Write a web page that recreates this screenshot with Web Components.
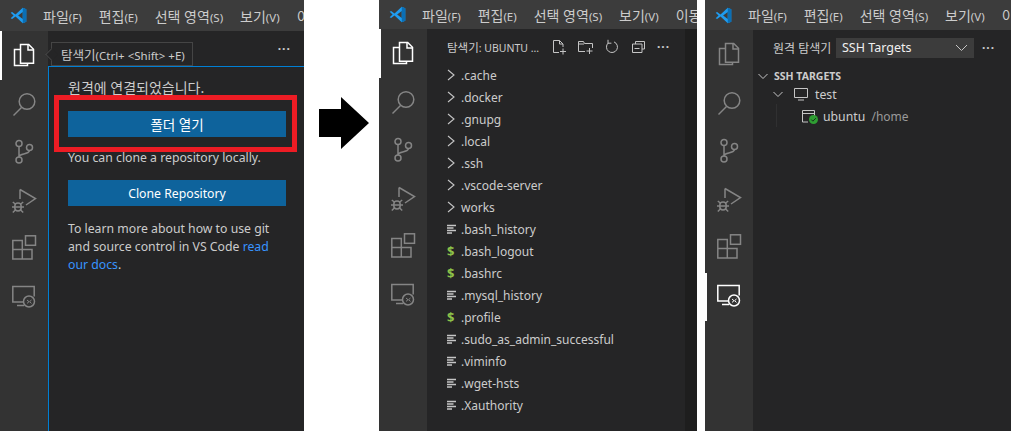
<!DOCTYPE html>
<html lang="ko">
<head>
<meta charset="utf-8">
<title>VS Code remote</title>
<style>
    html, body { margin: 0; height: 431px; overflow: hidden; background: #fff; }
    body { font-family: "Noto Sans", "Noto Sans CJK KR", sans-serif; }
    .main { display: flex; height: 431px; }
</style>
</head>
<body>
<div class="main">
    <vs-window style="width:304px" active="files" title-height="31">
        <vs-welcome></vs-welcome>
    </vs-window>
    <big-arrow></big-arrow>
    <vs-window style="width:318px" active="files" title-height="29" editor="12">
        <vs-explorer></vs-explorer>
    </vs-window>
    <div style="width:8px"></div>
    <vs-window style="width:306px" active="remote" title-height="30">
        <vs-remote></vs-remote>
    </vs-window>
</div>

<script>
const ICONS = {
    files: `<path d="M8.500 1.500h8.200l4.800 4.800v14h-13z"/><path d="M16 1.500v5.500h5.500"/><path d="M8.500 6.500h-6v16h13v-2.200"/>`,
    search: `<circle cx="15" cy="9.500" r="7.800"/><path d="M9.500 15.500 1.500 23.500"/>`,
    git: `<circle cx="7" cy="3.500" r="3"/><circle cx="7" cy="20" r="3"/><circle cx="17.500" cy="7.500" r="3"/><path d="M7 6.500v10.500M7 16.500c1-3.500 9.500-1.500 10.500-6"/>`,
    debug: `<path d="M8 .5V10M8 .5 23.500 9.500 14 16"/><rect x="2.800" y="14" width="6.400" height="8" rx="3.200"/><path d="M0 18h12M.8 13l2.500 2M11.200 13l-2.500 2M.8 23.500l2.500-2.500M11.200 23.500l-2.500-2.500"/>`,
    ext: `<path d="M.8 3.500h9.500v9h9.700V22H.8zM.8 12.500h9.500M10.300 12.500V22"/><rect x="13.500" y="-1.200" width="10" height="9.500"/>`,
    remote: `<path d="M12 16H.8V.5h21.400v10"/><path d="M5 19.500h7"/><circle cx="17" cy="15.500" r="5.500"/><path d="M15 14l2 1.700-2 1.700M19.500 14l-2 1.700 2 1.700" stroke-width="1"/>`
};

class VsLogo extends HTMLElement {
    constructor() {
        super();
        this.attachShadow({mode: 'open'}).innerHTML = `
        <style>:host{display:block;width:17px;height:17px} svg{display:block}</style>
        <svg width="17" height="17" viewBox="0 0 24 24">
            <path fill="#1f9cf0" d="M1 8.200 3 7l4.800 3.600L18 1l5 2.300v17.400L18 23 7.800 13.400 3 17l-2-1.200L5 12zM18 7 11.500 12l6.500 5z" fill-rule="evenodd"/>
            <path fill="#0a6fb5" d="M18 1l5 2.300v17.400L18 23V17l0-10z"/>
        </svg>`;
    }
}
customElements.define("vs-logo", VsLogo);

class VsTitlebar extends HTMLElement {
    constructor() {
        super();
        const menus = [['파일', '(F)'], ['편집', '(E)'], ['선택 영역', '(S)'], ['보기', '(V)'], ['이동', '(G)']];
        this.attachShadow({mode: 'open'}).innerHTML = `
        <style>
            :host{display:flex;align-items:center;background:#3c3c3c;color:#ccc;font-size:14px;overflow:hidden;white-space:nowrap;padding-left:10px;box-sizing:border-box}
            vs-logo{margin-right:16px;flex:none}
            span{flex:none;margin-right:17px}
            small{font-size:11.500px}
        </style>
        <vs-logo></vs-logo>
        ${menus.map(m => `<span>${m[0]}<small>${m[1]}</small></span>`).join('')}`;
    }
}
customElements.define("vs-titlebar", VsTitlebar);

class VsActivity extends HTMLElement {
    constructor() {
        super();
        const active = this.getAttribute('active');
        const items = Object.keys(ICONS).map(name => `
            <div class="item ${name === active ? 'on' : ''}">
                <svg width="24" height="24" viewBox="0 0 24 24">${ICONS[name]}</svg>
            </div>`).join('');
        this.attachShadow({mode: 'open'}).innerHTML = `
        <style>
            :host{display:block;width:48px;flex:none;background:#333}
            .item{height:48.500px;display:flex;align-items:center;justify-content:center;box-sizing:border-box;border-left:2px solid transparent;padding-right:2px}
            .on{border-left-color:#fff}
            svg{fill:none;stroke:#858585;stroke-width:1.500;overflow:visible}
            .on svg{stroke:#fff}
        </style>
        ${items}`;
    }
}
customElements.define("vs-activity", VsActivity);

class VsWindow extends HTMLElement {
    constructor() {
        super();
        const titleHeight = this.getAttribute('title-height') || 30;
        const editor = this.getAttribute('editor') || 0;
        const active = this.getAttribute('active');
        this.attachShadow({mode: 'open'}).innerHTML = `
        <style>
            :host{display:flex;flex-direction:column;height:431px;flex:none;overflow:hidden;color:#ccc}
            vs-titlebar{height:${titleHeight}px;flex:none}
            .body{flex:1;display:flex;min-height:0}
            .side{flex:1;background:#252526;min-width:0;position:relative}
            .editor{width:${editor}px;flex:none;background:#1e1e1e}
        </style>
        <vs-titlebar></vs-titlebar>
        <div class="body">
            <vs-activity active="${active}"></vs-activity>
            <div class="side"><slot></slot></div>
            <div class="editor"></div>
        </div>`;
    }
}
customElements.define("vs-window", VsWindow);

class VsButton extends HTMLElement {
    constructor() {
        super();
        this.attachShadow({mode: 'open'}).innerHTML = `
        <style>
            :host{display:flex;align-items:center;justify-content:center;height:26px;background:#0e639c;color:#fff;font-size:12.250px}
        </style>
        <slot></slot>`;
    }
}
customElements.define("vs-button", VsButton);

class VsWelcome extends HTMLElement {
    constructor() {
        super();
        this.attachShadow({mode: 'open'}).innerHTML = `
        <style>
            :host{display:block;font-size:12.250px;color:#ccc}
            .head{height:35px;display:flex;align-items:center;justify-content:flex-end;padding-right:13px;box-sizing:border-box;letter-spacing:1px;font-weight:700}
            .focus{height:365px;box-sizing:border-box;border-left:1px solid #007fd4;border-top:1px solid #007fd4;padding:12px 18px 0 19px}
            p{margin:0;line-height:18px}
            .ko{font-size:14px}
            .highlight{position:relative;margin:14px 0 12px}
            .highlight::after{content:"";position:absolute;left:-14px;right:-11px;top:-16px;bottom:-15px;border:5px solid #ed1c24}
            .highlight vs-button{font-size:13.500px}
            a{color:#3794ff;text-decoration:none}
            .clone{margin:13px 0 14px}
            .tip{position:absolute;left:3px;top:11px;height:24px;width:142px;box-sizing:border-box;padding:0 9px;display:flex;align-items:center;background:#252526;border:1px solid #454545;font-size:12.500px;white-space:nowrap}
            .tip small{font-size:11.500px}
            .tip::before{content:"";position:absolute;left:-5px;top:7px;width:8px;height:8px;background:#252526;border-left:1px solid #454545;border-bottom:1px solid #454545;transform:rotate(45deg)}
        </style>
        <div class="head">···</div>
        <div class="tip"><span>탐색기<small>(Ctrl+ &lt;Shift&gt; +E)</small></span></div>
        <div class="focus">
            <p class="ko">원격에 연결되었습니다.</p>
            <div class="highlight"><vs-button>폴더 열기</vs-button></div>
            <p>You can clone a repository locally.</p>
            <div class="clone"><vs-button>Clone Repository</vs-button></div>
            <p>To learn more about how to use git</p>
            <p>and source control in VS Code <a>read</a></p>
            <p><a>our docs</a>.</p>
        </div>`;
    }
}
customElements.define("vs-welcome", VsWelcome);

class TreeRow extends HTMLElement {
    constructor() {
        super();
        const kind = this.getAttribute('kind');
        let icon = '';
        if (kind === 'dir') {
            icon = `<svg width="10" height="12" viewBox="0 0 10 12"><path d="M1 1l6 5-6 5" fill="none" stroke="#c5c5c5" stroke-width="1.100"/></svg>`;
        } else if (kind === 'sh') {
            icon = `<b>$</b>`;
        } else {
            icon = `<svg width="10" height="10" viewBox="0 0 10 10"><path d="M0 1.500h9M0 4h6.500M0 6.500h9M0 9h5" stroke="#c5c5c5" stroke-width="1.300"/></svg>`;
        }
        this.attachShadow({mode: 'open'}).innerHTML = `
        <style>
            :host{display:flex;align-items:center;height:22px;padding-left:20px;font-size:12px;color:#ccc}
            .ic{width:14px;display:flex;align-items:center}
            b{color:#8dc149;font-size:13px}
        </style>
        <span class="ic">${icon}</span><slot></slot>`;
    }
}
customElements.define("tree-row", TreeRow);

class VsExplorer extends HTMLElement {
    constructor() {
        super();
        const dirs = ['.cache', '.docker', '.gnupg', '.local', '.ssh', '.vscode-server', 'works'];
        const files = [['.bash_history'], ['.bash_logout', 'sh'], ['.bashrc', 'sh'], ['.mysql_history'], ['.profile', 'sh'],
            ['.sudo_as_admin_successful'], ['.viminfo'], ['.wget-hsts'], ['.Xauthority']];
        const rows = dirs.map(d => `<tree-row kind="dir">${d}</tree-row>`).join('')
            + files.map(f => `<tree-row kind="${f[1] || 'file'}">${f[0]}</tree-row>`).join('');
        this.attachShadow({mode: 'open'}).innerHTML = `
        <style>
            :host{display:block;color:#ccc}
            .head{height:35px;display:flex;align-items:center;padding-left:20px;font-size:10.500px;white-space:nowrap}
            .title{width:105px;flex:none}
            .title em{font-style:normal;font-size:11.500px}
            svg{fill:none;stroke:#c5c5c5;stroke-width:1;margin-right:11px;flex:none}
            .more{font-weight:700;font-size:12px;letter-spacing:1px}
        </style>
        <div class="head">
            <span class="title"><em>탐색기</em>: UBUNTU ...</span>
            <svg width="15" height="16" viewBox="0 0 15 16"><path d="M7 13.500H1.500v-12h6l3.500 3.500v3M7.500 1.500V5H11M11 9.500v6M8 12.500h6"/></svg>
            <svg width="16" height="16" viewBox="0 0 16 16"><path d="M7 12.500H.5v-10h5l1 2h8v4.500M.5 5h5.500M11.500 9v6M8.500 12h6"/></svg>
            <svg width="15" height="16" viewBox="0 0 15 16" stroke-width="1.300"><path d="M3.200 4A5.500 5.500 0 1 0 9 2.900M3 .8v3.400h3.400"/></svg>
            <svg width="15" height="16" viewBox="0 0 15 16"><path d="M4.500 5V2.500h9v7.500H11M1.500 5h9.500v8.500H1.500zM3.500 9.500h5"/></svg>
            <span class="more">···</span>
        </div>
        ${rows}`;
    }
}
customElements.define("vs-explorer", VsExplorer);

class VsRemote extends HTMLElement {
    constructor() {
        super();
        this.attachShadow({mode: 'open'}).innerHTML = `
        <style>
            :host{display:block;color:#ccc;font-size:12.250px}
            .head{height:35px;display:flex;align-items:center;padding-left:20px;font-size:12px;white-space:nowrap}
            .title{width:63px;flex:none}
            .select{width:138px;height:20px;background:#3c3c3c;display:flex;align-items:center;justify-content:space-between;padding:0 6px;box-sizing:border-box;font-size:12.500px;color:#f0f0f0}
            .more{font-weight:700;font-size:12px;letter-spacing:1px;margin-left:8px}
            svg{fill:none;stroke:#c5c5c5;stroke-width:1;flex:none;display:block}
            .section{height:14px;display:flex;align-items:center;padding-left:5px;margin-top:4px;font-size:10.500px;font-weight:700;gap:6px}
            .row{height:22px;display:flex;align-items:center;position:relative}
            .test{padding-left:20px}
            .test .mon{margin:0 7px 0 11px}
            .ubuntu{padding-left:49px;gap:7px}
            .ubuntu::before{content:"";position:absolute;left:23px;top:-1px;bottom:0;width:1px;background:#303031}
            .dim{color:#9a9a9a;font-size:12px;margin-left:3px}
            .badge{position:relative;width:14px;height:14px}
            .badge .ok{position:absolute;right:-2px;bottom:-1px;stroke:none}
        </style>
        <div class="head">
            <span class="title">원격 탐색기</span>
            <div class="select"><span>SSH Targets</span>
                <svg width="13" height="8" viewBox="0 0 13 8"><path d="M1 1l5.500 5.500L12 1"/></svg></div>
            <span class="more">···</span>
        </div>
        <div class="section">
            <svg width="10" height="7" viewBox="0 0 10 7"><path d="M.5 1l4.500 4.500L9.500 1"/></svg>
            <span>SSH TARGETS</span>
        </div>
        <div class="row test">
            <svg width="10" height="7" viewBox="0 0 10 7"><path d="M.5 1l4.500 4.500L9.500 1"/></svg>
            <svg class="mon" width="14" height="14" viewBox="0 0 14 14"><path d="M.5 1.500h13v9H.5zM4 13h6"/></svg>
            <span>test</span>
        </div>
        <div class="row ubuntu">
            <div class="badge">
                <svg width="14" height="14" viewBox="0 0 14 14"><path d="M6 13H.5V1.500h12v6M.5 4.500h12"/></svg>
                <svg class="ok" width="9" height="9" viewBox="0 0 9 9"><circle cx="4.500" cy="4.500" r="4.500" fill="#2f9e33"/><path d="M2.300 4.600l1.600 1.600 2.900-3" fill="none" stroke="#16301a" stroke-width="1"/></svg>
            </div>
            <span>ubuntu <span class="dim">/home</span></span>
        </div>`;
    }
}
customElements.define("vs-remote", VsRemote);

class BigArrow extends HTMLElement {
    constructor() {
        super();
        this.attachShadow({mode: 'open'}).innerHTML = `
        <style>
            :host{display:block;width:75px;flex:none;padding-top:97px;padding-left:15px;box-sizing:border-box}
            svg{display:block}
        </style>
        <svg width="50" height="52" viewBox="0 0 50 52"><path d="M0 12h22V0l28 26-28 26V40H0z" fill="#000"/></svg>`;
    }
}
customElements.define("big-arrow", BigArrow);
</script>
</body>
</html>
